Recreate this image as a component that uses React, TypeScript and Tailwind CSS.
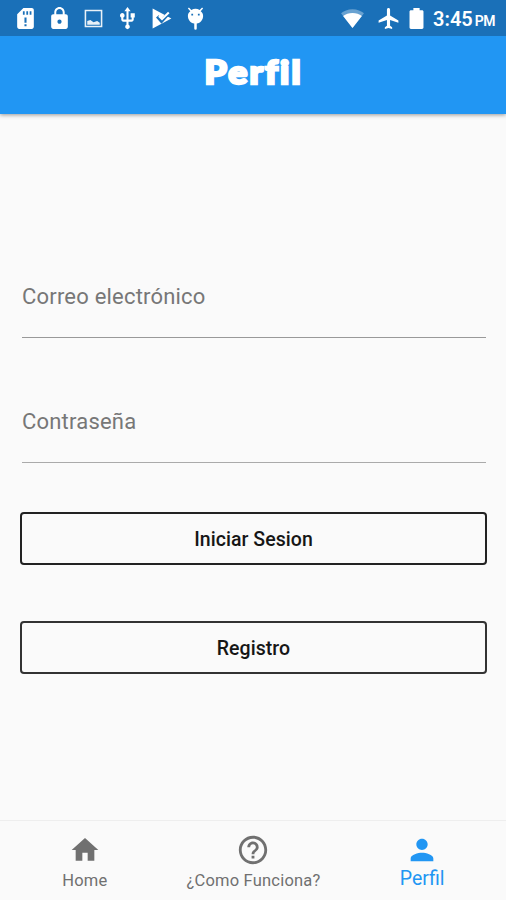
import { useState, type ReactNode } from 'react'

type Tab = 'home' | 'como' | 'perfil'

function Icon({ className, children }: { className: string; children: ReactNode }) {
  return <svg viewBox="0 0 24 24" fill="currentColor" className={`shrink-0 ${className}`}>{children}</svg>
}

const tabs: { id: Tab; label: string; icon: string; size: string }[] = [
  { id: 'home', label: 'Home', icon: 'M10 20v-6h4v6h5v-8h3L12 3 2 12h3v8z', size: 'size-8' },
  { id: 'como', label: '¿Como Funciona?', icon: 'M11 18h2v-2h-2v2zm1-16C6.48 2 2 6.48 2 12s4.48 10 10 10 10-4.48 10-10S17.52 2 12 2zm0 18c-4.41 0-8-3.59-8-8s3.59-8 8-8 8 3.59 8 8-3.59 8-8 8zm0-14c-2.21 0-4 1.79-4 4h2c0-1.1.9-2 2-2s2 .9 2 2c0 2-3 1.75-3 5h2c0-2.25 3-2.5 3-5 0-2.21-1.79-4-4-4z', size: 'size-[34px]' },
  { id: 'perfil', label: 'Perfil', icon: 'M12 12c2.21 0 4-1.79 4-4s-1.79-4-4-4-4 1.79-4 4 1.79 4 4 4zm0 2c-2.67 0-8 1.34-8 4v2h16v-2c0-2.66-5.33-4-8-4z', size: 'size-[34px]' },
]

function StatusBar() {
  return (
    <div className="flex h-9 items-center justify-between bg-[#1a70b8] pl-[13px] pr-[11px] text-white">
      <div className="flex items-center gap-[9px]">
        <Icon className="size-[25px]">
          <path fillRule="evenodd" d="M18 2h-8L4 8v12c0 1.1.9 2 2 2h12c1.1 0 2-.9 2-2V4c0-1.1-.9-2-2-2zM9.5 5h1.7v3.5H9.5zm3.3 0h1.7v3.5h-1.7zm3.2 0h1.7v3.5H16zM11 11h2v5h-2zm0 6.5h2v2h-2z" />
        </Icon>
        <Icon className="size-[25px]">
          <path d="M18 8h-1V6c0-2.76-2.24-5-5-5S7 3.24 7 6v2H6c-1.1 0-2 .9-2 2v10c0 1.1.9 2 2 2h12c1.1 0 2-.9 2-2V10c0-1.1-.9-2-2-2zm-6 9c-1.1 0-2-.9-2-2s.9-2 2-2 2 .9 2 2-.9 2-2 2zm3.1-9H8.9V6c0-1.71 1.39-3.1 3.1-3.1s3.1 1.39 3.1 3.1v2z" />
        </Icon>
        <Icon className="size-[25px] opacity-90">
          <path fillRule="evenodd" d="M3.5 3.5h17v17h-17zM5 5v14h14V5z" />
          <path d="M6 18v-3.5l3-1 3 2 3.5-1 2.5 1.5V18z" />
        </Icon>
        <Icon className="size-[25px]">
          <path d="M15 7v4h1v2h-3V5h2l-3-4-3 4h2v8H8v-2.07c.7-.37 1.2-1.08 1.2-1.93 0-1.21-.99-2.2-2.2-2.2-1.21 0-2.2.99-2.2 2.2 0 .85.5 1.56 1.2 1.93V13c0 1.11.89 2 2 2h3v3.05c-.71.37-1.2 1.1-1.2 1.95 0 1.22.99 2.2 2.2 2.2 1.21 0 2.2-.98 2.2-2.2 0-.85-.49-1.58-1.2-1.95V15h3c1.11 0 2-.89 2-2v-2h1V7h-4z" />
        </Icon>
        <Icon className="size-[25px]">
          <path d="M3.5 2.5 21.5 12 3.5 21.5z" />
          <path d="m8 10 4 4.5L20.5 5" fill="none" stroke="#1a70b8" strokeWidth="3.4" />
          <path d="m9.5 9.5 3 3L19 6.2" fill="none" stroke="currentColor" strokeWidth="2" />
        </Icon>
        <Icon className="size-[25px]">
          <path fillRule="evenodd" d="M5.7 1.5 8 3.8a8 8 0 0 1 8 0l2.3-2.3 1 1L17 5c1.500 1.200 2.300 2.700 2.300 4.500 0 3.500-2.500 6.700-6.100 7.400V21.500a1.200 1.200 0 0 1-2.400 0v-4.600c-3.600-.7-6.100-3.900-6.100-7.400C4.700 7.700 5.500 6.200 7 5L4.700 2.500zM8 7.500v1.600h1.700V7.500zm6.300 0v1.600H16V7.500z" />
        </Icon>
      </div>
      <div className="flex items-center">
        <Icon className="size-[25px]">
          <path opacity=".35" d="M12 21.2 23 7C20.5 4.6 16.5 3 12 3S3.500 4.600 1 7z" />
          <path d="M12 21.2 21 9.7C18.5 7.8 15.5 6.8 12 6.8S5.500 7.800 3 9.700z" />
        </Icon>
        <Icon className="ml-[11px] size-[25px]">
          <path d="M21.5 16v-2l-8-5V3.5c0-.83-.67-1.5-1.5-1.5s-1.5.67-1.5 1.5V9l-8 5v2l8-2.5V19l-2 1.5V22l3.5-1 3.5 1v-1.5l-2-1.5v-5.5z" />
        </Icon>
        <Icon className="ml-[3px] size-[25px]">
          <path d="M17.3 4H15V2H9v2H6.7C5.900 4 5.300 4.600 5.300 5.300v15.400c0 .7.6 1.300 1.400 1.300h10.600c.8 0 1.400-.6 1.400-1.300V5.300c0-.7-.6-1.300-1.400-1.300z" />
        </Icon>
        <div className="ml-[4px] flex w-[62px] items-baseline justify-between pt-[2px] leading-none">
          <span className="text-[20px] font-semibold">3:45</span>
          <span className="text-[14px] font-semibold tracking-[-0.5px]">PM</span>
        </div>
      </div>
    </div>
  )
}

export default function App() {
  const [tab, setTab] = useState<Tab>('perfil')
  const [email, setEmail] = useState('')
  const [password, setPassword] = useState('')

  const field = 'block h-[84px] w-full border-b bg-transparent pt-[2px] text-[22px] tracking-[0.2px] text-gray-800 placeholder:text-[#777] focus:outline-none'
  const button = 'block h-[53px] w-full rounded-[4px] border-2 pt-[2px] text-[19.5px] font-medium tracking-[0.05px] text-[#161616]'

  return (
    <div className="flex h-[900px] w-full flex-col overflow-hidden bg-[#fafafa] font-['Roboto',sans-serif]">
      <header className="z-10 shadow-[0_1px_4px_rgba(0,0,0,0.4)]">
        <StatusBar />
        <div className="flex h-[78px] items-center justify-center bg-[#2196f3]">
          <h1 className="scale-x-[1.08] pb-[8px] pl-[2px] font-['Lato',sans-serif] text-[33px] font-black leading-none tracking-[2px] text-white [-webkit-text-stroke:2.5px_white] [stroke-linejoin:round]">Perfil</h1>
        </div>
      </header>

      <main className="flex-1 pl-5 pr-[19px] pt-[140px]">
        <div className="pl-[2px] pr-px">
          <input value={email} onChange={e => setEmail(e.target.value)} placeholder="Correo electrónico" className={`${field} border-[#999]`} />
          <input type="password" value={password} onChange={e => setPassword(e.target.value)} placeholder="Contraseña" className={`${field} mt-[41px] border-[#aaa]`} />
        </div>
        <button className={`${button} mt-[49px] border-[#222]`}>Iniciar Sesion</button>
        <button className={`${button} mt-[56px] border-[#333]`}>Registro</button>
      </main>

      <nav className="grid h-20 grid-cols-3 border-t border-[#eee]">
        {tabs.map(t => (
          <button key={t.id} onClick={() => setTab(t.id)} className={`flex flex-col items-center pl-px pt-3 ${tab === t.id ? 'text-[#2196f3]' : 'text-[#707070]'}`}>
            <span className="flex h-[34px] items-center"><Icon className={t.size}><path d={t.icon} /></Icon></span>
            <span className={`whitespace-nowrap leading-6 ${tab === t.id ? 'text-[19.5px]' : 'pt-[2px] text-[16.5px] tracking-[0.2px]'}`}>{t.label}</span>
          </button>
        ))}
      </nav>
    </div>
  )
}
